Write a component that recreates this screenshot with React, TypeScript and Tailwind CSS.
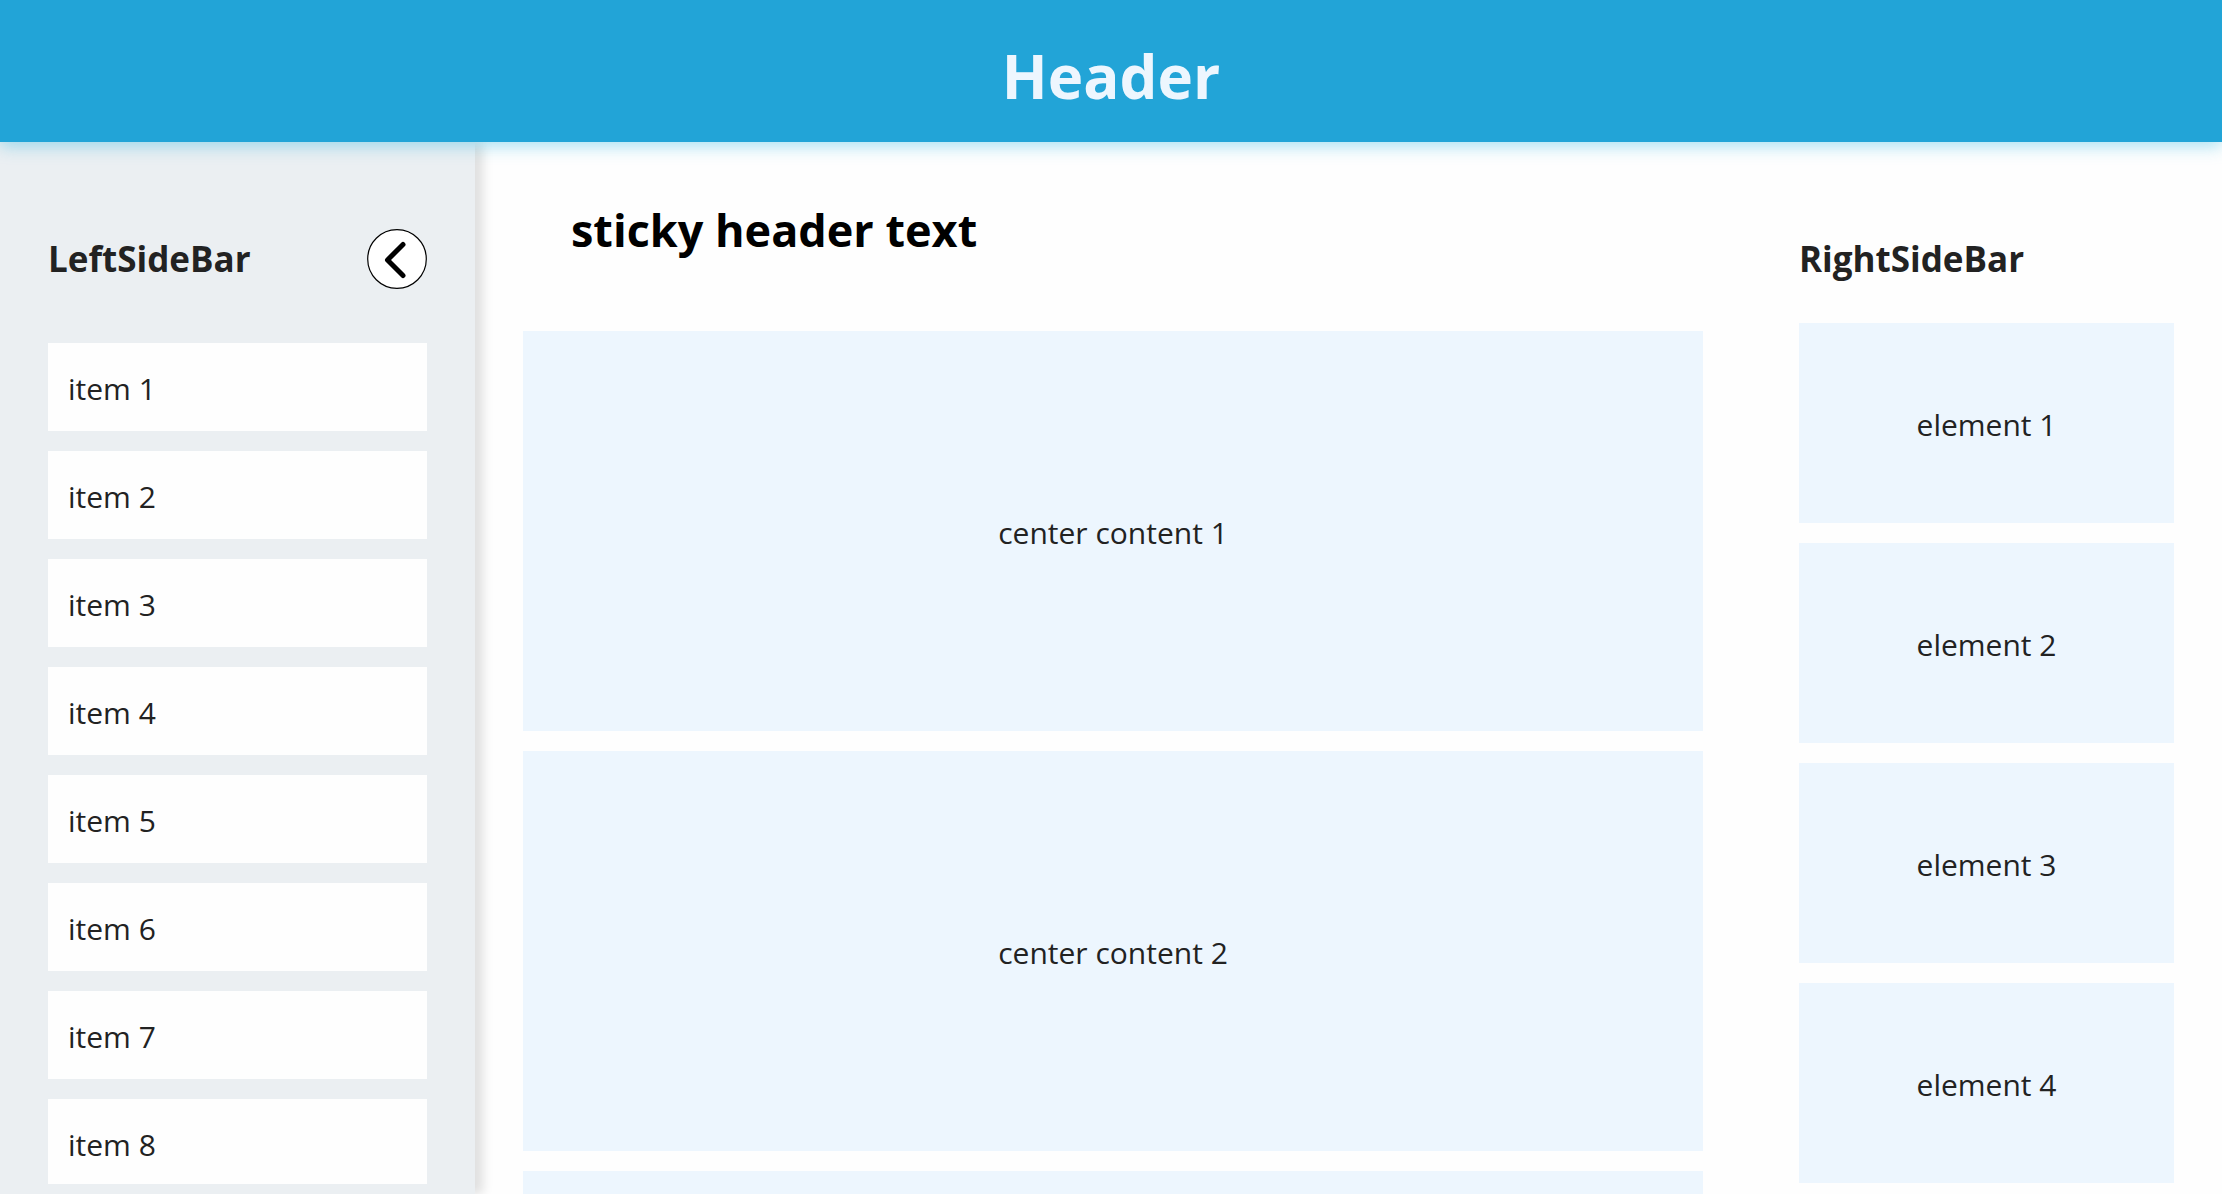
import { useState } from "react";

const items = ["item 1", "item 2", "item 3", "item 4", "item 5", "item 6", "item 7", "item 8"];
const contents = ["center content 1", "center content 2", "center content 3"];
const elements = ["element 1", "element 2", "element 3", "element 4"];

function LeftSideBar() {
  const [open, setOpen] = useState(true);
  return (
    <aside
      className={`${open ? "w-[475px]" : "w-[156px]"} flex shrink-0 flex-col bg-[#ebeff2] px-12 pb-2.5 shadow-[8px_0_10px_rgba(0,0,0,0.12)]`}
    >
      <div className="mt-[87px] mb-[54px] flex items-center justify-between">
        {open && <h2 className="text-[35px] leading-12 font-bold">LeftSideBar</h2>}
        <button
          type="button"
          aria-label="Toggle left sidebar"
          aria-expanded={open}
          onClick={() => setOpen(!open)}
          className="size-15 shrink-0"
        >
          <svg viewBox="0 0 60 60" className="size-full" fill="none" stroke="#000">
            <circle cx="30" cy="30" r="29.3" fill="#fff" strokeWidth="1.2" />
            <path d="M36 15.5 20.5 31 36 46.5" strokeWidth="5" strokeLinecap="round" strokeLinejoin="round" />
          </svg>
        </button>
      </div>
      {open && (
        <ul className="flex min-h-0 flex-1 flex-col gap-5 overflow-hidden">
          {items.map((item) => (
            <li key={item} className="shrink-0 bg-[#fefefe] px-5 pt-[22px] pb-[18px] text-[30px] leading-12">
              {item}
            </li>
          ))}
        </ul>
      )}
    </aside>
  );
}

function CenterContent() {
  return (
    <main className="min-w-0 flex-1 overflow-hidden px-12">
      <h2 className="sticky top-0 bg-[#fefefe] px-12 pt-14 pb-[69px] text-[45px] leading-16 font-bold text-black">
        sticky header text
      </h2>
      <div className="flex flex-col gap-5">
        {contents.map((content) => (
          <section key={content} className="flex h-100 items-center justify-center bg-[#edf6fe] pt-1 text-[30px] leading-12">
            {content}
          </section>
        ))}
      </div>
    </main>
  );
}

function RightSideBar() {
  return (
    <aside className="w-[471px] shrink-0 overflow-hidden px-12">
      <h2 className="mt-[93px] mb-10 text-[35px] leading-12 font-bold">RightSideBar</h2>
      <ul className="flex flex-col gap-5">
        {elements.map((element) => (
          <li key={element} className="flex h-50 items-center justify-center bg-[#edf6fe] pt-1 text-[30px] leading-12">
            {element}
          </li>
        ))}
      </ul>
    </aside>
  );
}

export default function App() {
  return (
    <div className="flex h-screen flex-col overflow-hidden bg-[#fefefe] font-['Open_Sans','Noto_Sans',sans-serif] text-[#222]">
      <header className="relative z-10 flex justify-center bg-[#22a4d7] pt-8 pb-[22px] shadow-[0_4px_16px_rgba(34,180,225,0.4)]">
        <h1 className="text-[60px] leading-22 font-bold text-[#edf6fe]">Header</h1>
      </header>
      <div className="flex min-h-0 flex-1">
        <LeftSideBar />
        <CenterContent />
        <RightSideBar />
      </div>
    </div>
  );
}
